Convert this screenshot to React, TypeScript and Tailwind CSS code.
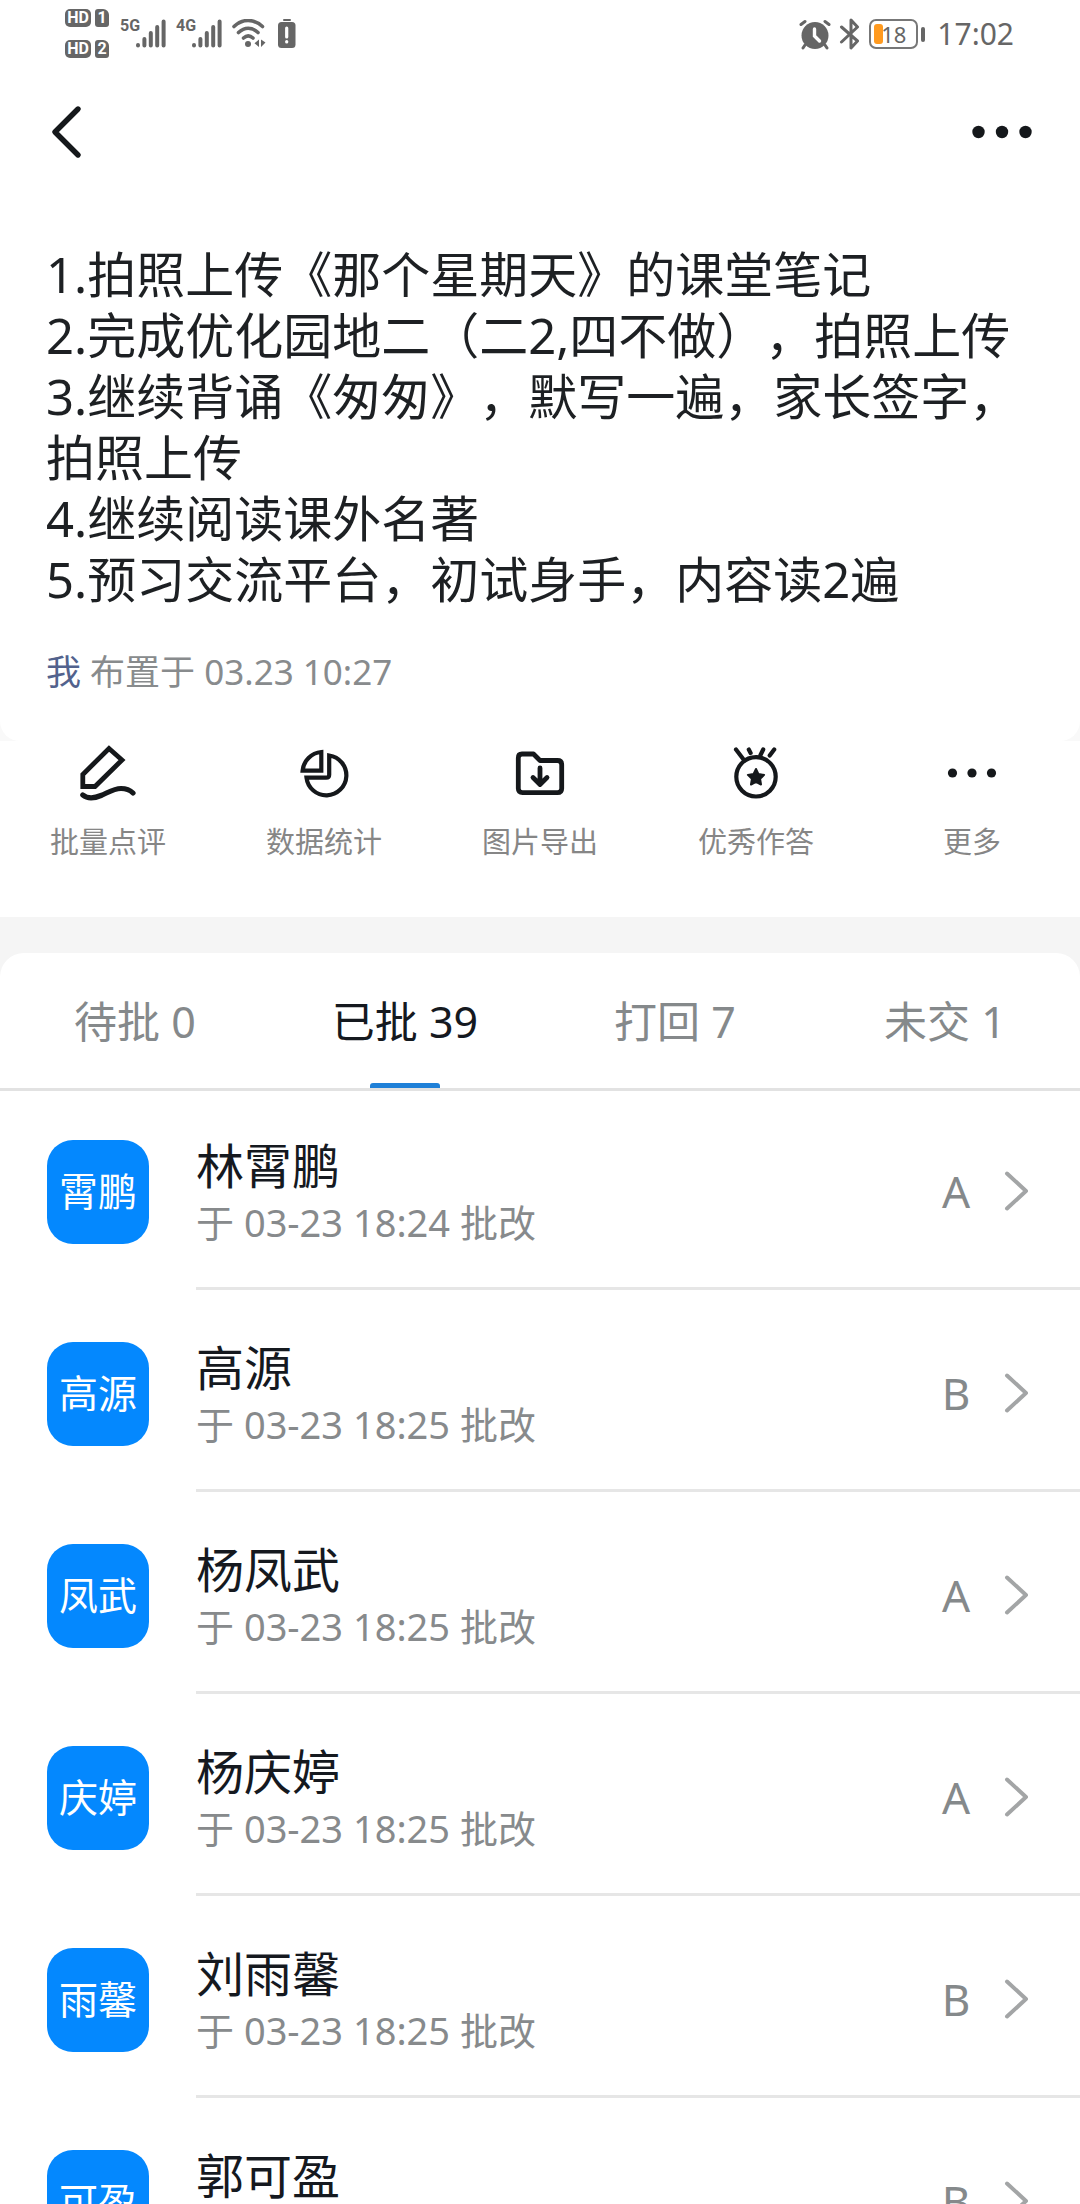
import React, { useState } from 'react';

interface Submission {
  name: string;
  time: string;
  grade: string;
}

const HOMEWORK = `1.拍照上传《那个星期天》的课堂笔记
2.完成优化园地二（二2,四不做），拍照上传
3.继续背诵《匆匆》，默写一遍，家长签字，拍照上传
4.继续阅读课外名著
5.预习交流平台，初试身手，内容读2遍`;

const TABS = [
  { id: 'pending', label: '待批', count: 0 },
  { id: 'reviewed', label: '已批', count: 39 },
  { id: 'returned', label: '打回', count: 7 },
  { id: 'missing', label: '未交', count: 1 },
];

const SUBMISSIONS: Submission[] = [
  { name: '林霄鹏', time: '03-23 18:24', grade: 'A' },
  { name: '高源', time: '03-23 18:25', grade: 'B' },
  { name: '杨凤武', time: '03-23 18:25', grade: 'A' },
  { name: '杨庆婷', time: '03-23 18:25', grade: 'A' },
  { name: '刘雨馨', time: '03-23 18:25', grade: 'B' },
  { name: '郭可盈', time: '03-23 18:25', grade: 'B' },
];

const iconProps = {
  width: 60,
  height: 60,
  viewBox: '0 0 60 60',
  fill: 'none',
  stroke: 'currentColor',
  strokeWidth: 4.8,
  strokeLinecap: 'round' as const,
  strokeLinejoin: 'round' as const,
  'aria-hidden': true,
};

const PenIcon = () => (
  <svg {...iconProps}>
    <path d="M31 5.5 44 17 17 43.5H4.8V31.5Z" strokeLinejoin="miter" />
    <path d="M4.8 52C9 55.5 16 55.5 23 52.5C31 49 36 45.5 43 45.5C48 45.5 52 47 55 50" strokeWidth="5.2" />
  </svg>
);

const PieIcon = () => (
  <svg {...iconProps} strokeWidth="4.2" strokeLinejoin="miter">
    <path d="M27.3 9V27.7H8.6A20.5 20.5 0 0 1 27.3 9Z" />
    <path d="M35.2 12.5A20 20 0 1 1 12.5 34.7H32.2Q35.2 34.7 35.2 31.7Z" />
  </svg>
);

const FolderIcon = () => (
  <svg {...iconProps}>
    <path d="M12 11H23.5L30 17.5H47.5Q51.7 17.5 51.7 21.7V45.5Q51.7 49.7 47.5 49.7H12.5Q8.3 49.7 8.3 45.5V15Q8.3 11 12 11Z" />
    <path d="M30 25V41M23 34.5 30 41.5 37 34.5" />
  </svg>
);

const MedalIcon = () => (
  <svg {...iconProps} strokeWidth="4.2">
    <circle cx="30" cy="33.8" r="19.7" />
    <path d="M10 6.5 17.2 16M22.8 6.5 24.6 10M37.2 6.5 34.5 12M48.2 6.5 43.7 12.5" />
    <path
      d="M30 26 32.5 31.1 38.1 31.9 34.1 35.9 35 41.5 30 38.9 25 41.5 25.9 35.9 21.9 31.9 27.5 31.1Z"
      fill="currentColor"
      strokeWidth="2"
    />
  </svg>
);

const MoreIcon = () => (
  <svg {...iconProps} fill="currentColor" stroke="none">
    <circle cx="10.5" cy="30" r="4.6" />
    <circle cx="30" cy="30" r="4.6" />
    <circle cx="49.5" cy="30" r="4.6" />
  </svg>
);

const ACTIONS = [
  { label: '批量点评', icon: <PenIcon /> },
  { label: '数据统计', icon: <PieIcon /> },
  { label: '图片导出', icon: <FolderIcon /> },
  { label: '优秀作答', icon: <MedalIcon /> },
  { label: '更多', icon: <MoreIcon /> },
];

const HdBadge = ({ sim }: { sim: number }) => (
  <div className="flex gap-1 text-white font-bold">
    <span className="flex items-center justify-center w-[26px] h-[18px] rounded-[5px] bg-[#666] text-[16px] leading-none font-['Roboto',sans-serif]">
      HD
    </span>
    <span className="flex items-center justify-center w-[14px] h-[18px] rounded-[3px] rounded-tr-[6px] bg-[#666] text-[16px] leading-none font-['Roboto',sans-serif]">
      {sim}
    </span>
  </div>
);

const Signal = ({ network }: { network: string }) => (
  <div className="flex items-start">
    <span className="w-4 text-[16px] leading-[14px] font-bold font-['Liberation_Sans_Narrow','Roboto',sans-serif]">
      {network}
    </span>
    <svg width="30" height="29" viewBox="0 0 30 29" fill="none" stroke="currentColor" strokeWidth="4" strokeLinecap="round" aria-hidden="true">
      <path d="M2 26V26.4M8.4 20V26.6M14.8 14V26.6M21.2 8V26.6M27.6 2.4V26.6" />
    </svg>
  </div>
);

const StatusBar = () => (
  <div className="flex justify-between h-16 pl-[65px] pr-[66px] text-[#666]">
    <div className="flex items-start gap-[11px] pt-[9px]">
      <div className="flex flex-col gap-[13px]">
        <HdBadge sim={1} />
        <HdBadge sim={2} />
      </div>
      <div className="flex gap-[10px] pt-[10px]">
        <Signal network="5G" />
        <Signal network="4G" />
        <svg width="34" height="30" viewBox="0 0 34 30" fill="none" stroke="currentColor" strokeWidth="3.6" strokeLinecap="round" aria-hidden="true">
          <path d="M2 7.5C10.5-.5 21.5-.5 30.5 7.5M6.5 13.5C12.5 7.8 20 7.8 26 13.5M11.5 19C14.5 16.2 18 16.2 21 19" />
          <circle cx="16" cy="25" r="3" fill="currentColor" stroke="none" />
          <path d="M27 20.5V28L22.5 24.2ZM29 20.5V28L33.5 23.5Z" fill="currentColor" stroke="none" />
        </svg>
        <svg width="18" height="30" viewBox="0 0 18 30" className="ml-[2px]" fill="currentColor" aria-hidden="true">
          <rect x="5" y="0" width="8" height="2" rx="1" />
          <rect x="0" y="3" width="17.5" height="26" rx="3.5" />
          <path d="M8.7 9V18M8.7 22.6V23" stroke="#fff" strokeWidth="3.2" strokeLinecap="round" />
        </svg>
      </div>
    </div>
    <div className="flex items-center h-[68px]">
      <svg width="32" height="32" viewBox="0 0 32 32" fill="none" stroke="currentColor" strokeWidth="3" strokeLinecap="round" aria-hidden="true">
        <circle cx="16" cy="17.5" r="13.5" fill="currentColor" stroke="none" />
        <path d="M2 6.5 6 3.5M30 6.5 26 3.5M6 27 4 30M26 27 28 30" />
        <path d="M15.5 11V18L20.5 23" stroke="#fff" strokeWidth="3.4" />
      </svg>
      <svg width="22" height="32" viewBox="0 0 22 32" className="ml-2" fill="none" stroke="currentColor" strokeWidth="3" strokeLinecap="round" strokeLinejoin="round" aria-hidden="true">
        <path d="M2.5 9 18.5 23 12 30V2L18.5 9 2.5 24" />
      </svg>
      <div className="flex items-center gap-[3px] ml-2">
        <div className="relative w-[49px] h-[30px] rounded-[7px] border-2 border-[#777]">
          <span className="absolute left-[3px] top-[3px] w-[9px] h-5 rounded-[3px] bg-[#ff9a1f]" />
          <span className="absolute inset-0 flex items-center justify-center text-[22px] leading-none">18</span>
        </div>
        <span className="w-1 h-[15px] rounded-full bg-[#666]" />
      </div>
      <span className="ml-3 text-[30px] leading-none">17:02</span>
    </div>
  </div>
);

const SubmissionRow = ({ item }: { item: Submission }) => (
  <li>
    <a href="#" className="flex pl-[47px]">
      <span className="flex items-center justify-center shrink-0 w-[102px] h-[104px] mt-[52px] mb-[46px] pb-1 rounded-[26px] bg-[#0488fe] text-white text-[39px] leading-none">
        {item.name.slice(-2)}
      </span>
      <div className="flex flex-1 justify-between ml-[47px] pt-[46px] pr-[50px] border-b-[3px] border-[#e6e6e6]">
        <div>
          <div className="text-[48px] leading-[64px] text-[#15191f]">{item.name}</div>
          <div className="text-[38px] leading-[48px] text-[#878a8c]">于 {item.time} 批改</div>
        </div>
        <div className="flex items-center gap-[31px] h-[113px] text-[#85898b]">
          <span className="w-[34px] text-center text-[44px] leading-none">{item.grade}</span>
          <svg width="26" height="40" viewBox="0 0 26 40" fill="none" stroke="#a3a5a6" strokeWidth="4" strokeLinecap="round" strokeLinejoin="round" aria-hidden="true">
            <path d="M3 2.5 22 20 3 37.5" />
          </svg>
        </div>
      </div>
    </a>
  </li>
);

export default function App() {
  const [activeTab, setActiveTab] = useState('reviewed');

  return (
    <div
      lang="zh-CN"
      className="flex flex-col h-screen overflow-hidden bg-[#f5f5f5] font-['Noto_Sans','Noto_Sans_CJK_SC',sans-serif]"
    >
      <div className="bg-[#f9f9f9]">
        <div className="bg-white rounded-b-[20px] pb-[45px]">
          <StatusBar />
          <header className="flex items-center justify-between h-[136px] px-[46px] text-[#15181b]">
            <button type="button" aria-label="返回">
              <svg width="40" height="56" viewBox="0 0 40 56" fill="none" stroke="currentColor" strokeWidth="5.4" strokeLinecap="round" strokeLinejoin="round">
                <path d="M32 5 9 28 32 51" />
              </svg>
            </button>
            <button type="button" aria-label="更多选项">
              <svg width="64" height="40" viewBox="0 0 64 40" fill="currentColor">
                <circle cx="8.5" cy="20" r="6.2" />
                <circle cx="32" cy="20" r="6.2" />
                <circle cx="55.5" cy="20" r="6.2" />
              </svg>
            </button>
          </header>
          <p className="pt-11 px-[46px] text-[49px] leading-[61px] text-[#1d2023] whitespace-pre-line [text-spacing-trim:space-all]">
            {HOMEWORK}
          </p>
          <p className="mt-[38px] px-[46px] text-[35px] leading-[48px] text-[#888b8d]">
            <span className="text-[#52628d]">我</span> 布置于 03.23 10:27
          </p>
        </div>
      </div>

      {/* Quick actions */}
      <div className="grid grid-cols-5 pt-[2px] pb-[55px] bg-white">
        {ACTIONS.map((action) => (
          <button key={action.label} type="button" className="flex flex-col items-center gap-[19px] text-[#15181b]">
            {action.icon}
            <span className="text-[29px] leading-[40px] text-[#868686]">{action.label}</span>
          </button>
        ))}
      </div>

      <main className="flex-1 min-h-0 mt-9 overflow-hidden bg-white rounded-t-[24px]">
        <div role="tablist" className="grid grid-cols-4 border-b-[3px] border-[#e2e2e2]">
          {TABS.map((tab) => (
            <button
              key={tab.id}
              type="button"
              role="tab"
              aria-selected={activeTab === tab.id}
              onClick={() => setActiveTab(tab.id)}
              className={`relative h-[135px] pt-[2px] text-[43px] leading-none ${activeTab === tab.id ? 'text-[#15191f]' : 'text-[#85898b]'}`}
            >
              {tab.label} {tab.count}
              {activeTab === tab.id && (
                <span className="absolute bottom-0 left-1/2 -translate-x-1/2 w-[70px] h-[5px] rounded-t-[3px] bg-[#1f80d8]" />
              )}
            </button>
          ))}
        </div>
        <ul className="-mt-[3px]">
          {SUBMISSIONS.map((item) => (
            <SubmissionRow key={item.name} item={item} />
          ))}
        </ul>
      </main>
    </div>
  );
}
